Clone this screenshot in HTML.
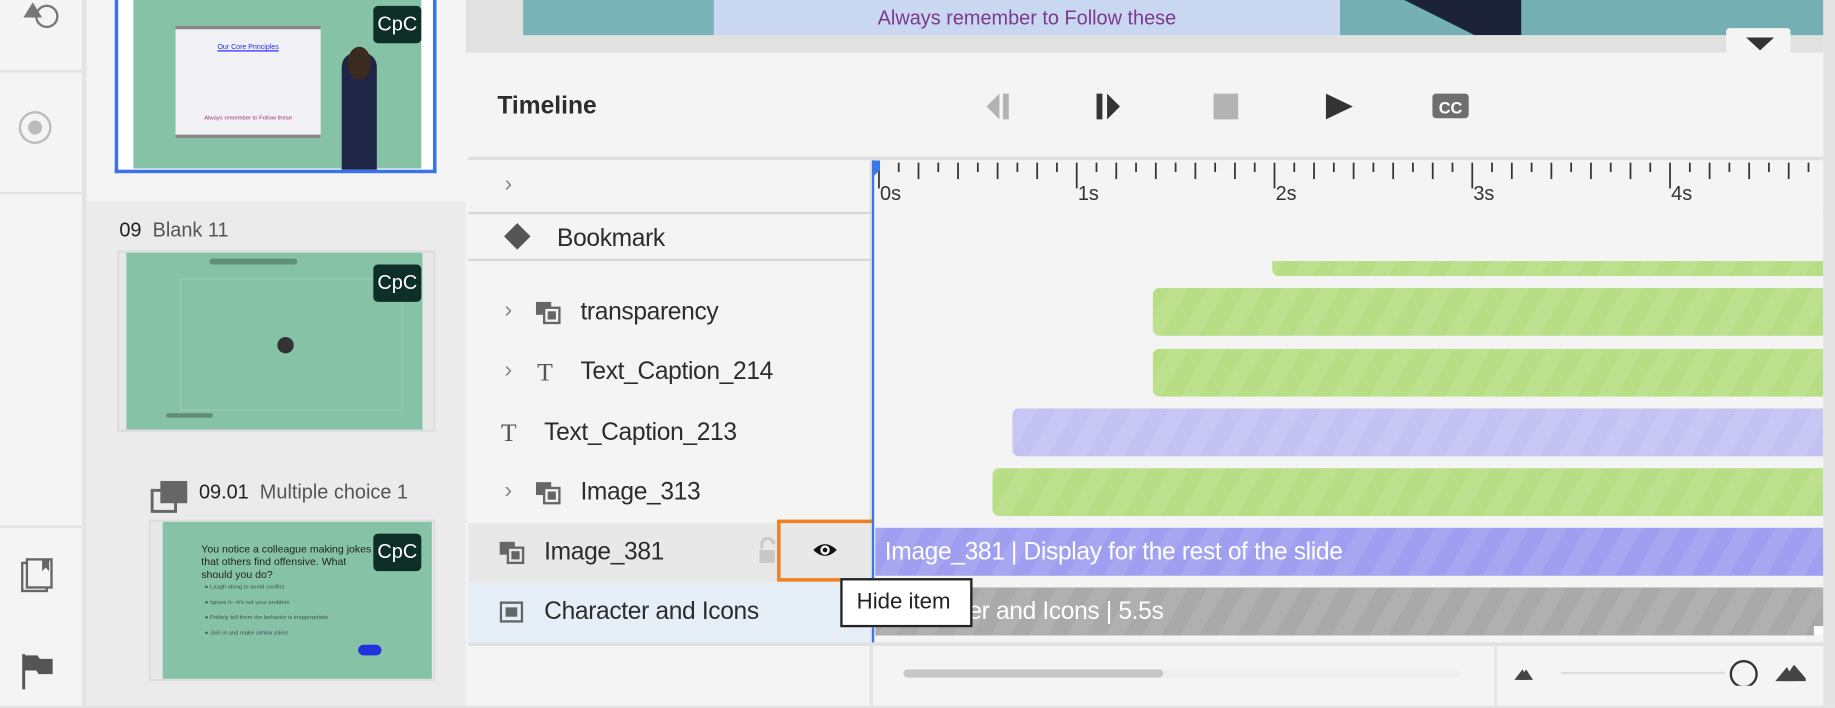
<!DOCTYPE html>
<html><head><meta charset="utf-8"><style>
*{margin:0;padding:0;box-sizing:border-box}
body{width:1835px;height:708px;overflow:hidden;background:#f4f4f4;font-family:"Liberation Sans",sans-serif}
#w{position:absolute;left:0;top:0;width:1568px;height:605px;transform:scale(1.17028,1.17025);transform-origin:0 0}
.a{position:absolute}
.lbl{position:absolute;font-size:21px;color:#2c2c2c;letter-spacing:-0.3px}
.chev{position:absolute;color:#8a8a8a;font-size:20px}
.bar{position:absolute;border-radius:6px 0 0 6px;background-image:repeating-linear-gradient(-60deg,rgba(255,255,255,0) 0 14px,rgba(255,255,255,.08) 14px 28px)}
.cpc{position:absolute;width:41px;height:32px;background:#0e2e28;border-radius:4px;color:#fff;font-size:17px;text-align:center;line-height:32px}
.thumb{position:absolute;background:#85c2a6}
</style></head><body><div id="w">
<div class="a" style="left:0;top:0;width:70px;height:605px;background:#f4f4f4"></div>
<div class="a" style="left:70px;top:0;width:4px;height:605px;background:#e4e4e4"></div>
<div class="a" style="left:0;top:60px;width:70px;height:2px;background:#e2e2e2"></div>
<div class="a" style="left:0;top:164px;width:70px;height:2px;background:#e2e2e2"></div>
<div class="a" style="left:0;top:449px;width:70px;height:2px;background:#e2e2e2"></div>
<svg class="a" style="left:14px;top:0" width="40" height="40"><polygon points="6,15 14,2 22,15" fill="#777"/><circle cx="26" cy="14" r="9" fill="none" stroke="#777" stroke-width="2"/></svg>
<div class="a" style="left:16px;top:95px;width:28px;height:28px;border:2px solid #bbb;border-radius:50%"></div>
<div class="a" style="left:24px;top:103px;width:12px;height:12px;background:#bbb;border-radius:50%"></div>
<svg class="a" style="left:16px;top:476px" width="34" height="34"><rect x="3" y="5" width="21" height="24" fill="none" stroke="#666" stroke-width="2"/><rect x="7" y="2" width="21" height="24" fill="#f4f4f4" stroke="#666" stroke-width="2"/><polygon points="20,2 26,2 26,12 23,9 20,12" fill="#666"/></svg>
<svg class="a" style="left:17px;top:556px" width="34" height="34"><rect x="2" y="3" width="2.5" height="30" fill="#555"/><polygon points="4,4 15,4 17,7 28,7 28,20 16,20 14,17 4,17" fill="#555"/></svg>
<div class="a" style="left:74px;top:0;width:324px;height:172px;background:#f4f4f4"></div>
<div class="a" style="left:74px;top:172px;width:324px;height:433px;background:#ebebeb"></div>
<div class="a" style="left:98px;top:0;width:275px;height:148px;border:3px solid #3a72e8;border-top:none;background:#fff"></div>
<div class="thumb" style="left:114px;top:0;width:246px;height:144px"></div>
<div class="a" style="left:150px;top:22px;width:124px;height:96px;background:#f2f2f6;border-top:3px solid #888;border-bottom:3px solid #888"></div>
<div class="a" style="left:150px;top:38px;width:124px;text-align:center;font-size:6px;color:#22f;text-decoration:underline">Our Core Principles</div>
<div class="a" style="left:150px;top:98px;width:124px;text-align:center;font-size:5px;color:#937">Always remember to Follow these</div>
<div class="a" style="left:292px;top:45px;width:30px;height:100px;background:#1e2547;border-radius:12px 12px 0 0"></div>
<div class="a" style="left:297px;top:40px;width:20px;height:28px;background:#3a2a20;border-radius:50%"></div>
<div class="cpc" style="left:319px;top:5px">CpC</div>
<div class="a" style="left:102px;top:187px;font-size:17px;color:#2c2c2c"><b style="font-weight:normal;color:#222">09</b>&nbsp; <span style="color:#555">Blank 11</span></div>
<div class="a" style="left:100px;top:214px;width:272px;height:155px;border:2px solid #ddd;background:#e8e8e8"></div>
<div class="thumb" style="left:108px;top:216px;width:253px;height:151px"></div>
<div class="a" style="left:179px;top:221px;width:75px;height:5px;background:#5f8f7a;border-radius:3px"></div>
<div class="a" style="left:154px;top:238px;width:190px;height:113px;border:1px solid #9ccbb4"></div>
<div class="a" style="left:237px;top:288px;width:14px;height:14px;background:#333;border-radius:50%"></div>
<div class="a" style="left:142px;top:353px;width:40px;height:4px;background:#5f8f7a;border-radius:2px"></div>
<div class="cpc" style="left:319px;top:226px">CpC</div>
<svg class="a" style="left:128px;top:409px" width="34" height="30"><rect x="2" y="10" width="20" height="18" fill="none" stroke="#666" stroke-width="2.5"/><rect x="9" y="2" width="23" height="19" fill="#666"/></svg>
<div class="a" style="left:170px;top:411px;font-size:17px"><span style="color:#222">09.01</span>&nbsp; <span style="color:#555">Multiple choice 1</span></div>
<div class="a" style="left:127px;top:444px;width:245px;height:138px;border:2px solid #ddd;background:#e8e8e8"></div>
<div class="thumb" style="left:139px;top:446px;width:230px;height:134px"></div>
<div class="a" style="left:172px;top:464px;width:150px;font-size:9px;color:#222;line-height:11px">You notice a colleague making jokes that others find offensive. What should you do?</div>
<div class="a" style="left:175px;top:496px;font-size:5px;color:#455;line-height:13px">● Laugh along to avoid conflict<br>● Ignore it—it's not your problem<br>● Politely tell them the behavior is inappropriate<br>● Join in and make similar jokes</div>
<div class="a" style="left:306px;top:551px;width:20px;height:9px;background:#2233dd;border-radius:5px"></div>
<div class="cpc" style="left:319px;top:456px">CpC</div>
<div class="a" style="left:398px;top:0;width:1170px;height:45px;background:#e1e1e1"></div>
<div class="a" style="left:447px;top:0;width:163px;height:30px;background:#78b4b6"></div>
<div class="a" style="left:610px;top:0;width:535px;height:30px;background:#c9d7f1"></div>
<div class="a" style="left:610px;top:6px;width:535px;text-align:center;font-size:17px;color:#7a3a8e">Always remember to Follow these</div>
<div class="a" style="left:1145px;top:0;width:413px;height:30px;background:#74b0b3"></div>
<div class="a" style="left:1200px;top:0;width:100px;height:30px;background:#1c2238;clip-path:polygon(0 0,100% 0,100% 100%,60% 100%)"></div>
<div class="a" style="left:1475px;top:24px;width:55px;height:21px;background:#f4f4f4;border-radius:3px 3px 0 0"></div>
<svg class="a" style="left:1492px;top:32px" width="26" height="12"><polygon points="0,0 24,0 12,11" fill="#333"/></svg>
<div class="a" style="left:400px;top:45px;width:1158px;height:90px;background:#f4f4f4"></div>
<div class="a" style="left:425px;top:79px;font-size:21px;font-weight:bold;color:#2c2c2c">Timeline</div>
<svg class="a" style="left:840px;top:76px" width="440" height="30">
<polygon points="3,15 14,4 14,26" fill="#b3b3b3"/><rect x="17" y="4" width="5" height="22" fill="#b3b3b3"/>
<rect x="97" y="4" width="5" height="22" fill="#333"/><polygon points="106,4 117,15 106,26" fill="#333"/>
<rect x="197" y="4" width="21" height="22" fill="#b3b3b3"/>
<polygon points="293,4 316,15 293,26" fill="#333"/>
<rect x="384" y="4" width="31" height="21" rx="3" fill="#6e6e6e"/><text x="399.5" y="21" font-size="14" font-weight="bold" fill="#fff" text-anchor="middle" font-family="Liberation Sans">CC</text>
</svg>
<div class="a" style="left:400px;top:134px;width:1158px;height:3px;background:#e0e0e0"></div>
<div class="a" style="left:400px;top:137px;width:344px;height:468px;background:#f4f4f4"></div>
<div class="a" style="left:743px;top:137px;width:3px;height:468px;background:#e3e3e3"></div>
<div class="a" style="left:400px;top:181px;width:1158px;height:2px;background:#d8d8d8"></div>
<div class="a" style="left:400px;top:221px;width:1158px;height:2px;background:#d8d8d8"></div>
<div class="chev" style="left:431px;top:146px">›</div>
<div class="a" style="left:434px;top:194px;width:16px;height:16px;background:#555;transform:rotate(45deg)"></div>
<div class="lbl" style="left:476px;top:192px">Bookmark</div>
<div class="a" style="left:400px;top:447px;width:344px;height:51px;background:#e8e8e8"></div>
<div class="a" style="left:400px;top:498px;width:344px;height:51px;background:#e6eef8"></div>
<div class="a" style="left:400px;top:549px;width:1158px;height:3px;background:#e1e1e1"></div>
<div class="chev" style="left:431px;top:254px">›</div>
<div class="chev" style="left:431px;top:305px">›</div>
<div class="chev" style="left:431px;top:408px">›</div>
<svg class="a" style="left:457px;top:256px" width="24" height="22"><rect x="1" y="2" width="13" height="11" fill="#666"/><rect x="8" y="7" width="13" height="13" fill="#f4f4f4" stroke="#666" stroke-width="2"/><rect x="11" y="10" width="7" height="7" fill="#666"/></svg>
<svg class="a" style="left:457px;top:410px" width="24" height="22"><rect x="1" y="2" width="13" height="11" fill="#666"/><rect x="8" y="7" width="13" height="13" fill="#f4f4f4" stroke="#666" stroke-width="2"/><rect x="11" y="10" width="7" height="7" fill="#666"/></svg>
<svg class="a" style="left:426px;top:461px" width="24" height="22"><rect x="1" y="2" width="13" height="11" fill="#666"/><rect x="8" y="7" width="13" height="13" fill="#e8e8e8" stroke="#666" stroke-width="2"/><rect x="11" y="10" width="7" height="7" fill="#666"/></svg>
<div class="a" style="left:459px;top:305px;font-family:'Liberation Serif',serif;font-size:22px;color:#555">T</div>
<div class="a" style="left:428px;top:357px;font-family:'Liberation Serif',serif;font-size:22px;color:#555">T</div>
<svg class="a" style="left:427px;top:514px" width="22" height="20"><rect x="1" y="1" width="18" height="16" fill="none" stroke="#666" stroke-width="2"/><rect x="5" y="5" width="10" height="8" fill="#666"/></svg>
<div class="lbl" style="left:496px;top:255px">transparency</div>
<div class="lbl" style="left:496px;top:306px">Text_Caption_214</div>
<div class="lbl" style="left:465px;top:358px">Text_Caption_213</div>
<div class="lbl" style="left:496px;top:409px">Image_313</div>
<div class="lbl" style="left:465px;top:460px">Image_381</div>
<div class="lbl" style="left:465px;top:511px">Character and Icons</div>
<svg class="a" style="left:647px;top:459px" width="20" height="24"><path d="M4 10 V6 a5 5 0 0 1 10 0" fill="none" stroke="#c8c8c8" stroke-width="2.5"/><rect x="2" y="11" width="13" height="11" fill="#c8c8c8"/></svg>
<div class="a" style="left:664px;top:444px;width:86px;height:53px;border:3px solid #f07f22"></div>
<svg class="a" style="left:694px;top:462px" width="22" height="16"><path d="M1 8 Q11 -2 21 8 Q11 18 1 8Z" fill="#111"/><circle cx="11" cy="8" r="4" fill="#fff"/><circle cx="11" cy="8" r="2" fill="#111"/></svg>
<div class="a" style="left:746px;top:137px;width:812px;height:412px;background:#f4f4f4;overflow:hidden">
<svg class="a" style="left:0;top:0" width="812" height="44" id="rul"></svg>
</div>
<div class="a" style="left:745px;top:137px;width:2px;height:412px;background:#3b78e7"></div>
<div class="a" style="left:745px;top:137px;width:7px;height:15px;background:#3b78e7;clip-path:polygon(0 0,100% 0,100% 55%,0 100%)"></div>
<div class="bar" style="left:1087px;top:223px;width:471px;height:13px;background-color:#b7de85;border-radius:0 0 0 6px"></div>
<div class="bar" style="left:985px;top:246px;width:573px;height:41px;background-color:#b7de85"></div>
<div class="bar" style="left:985px;top:298px;width:573px;height:41px;background-color:#b7de85"></div>
<div class="bar" style="left:865px;top:349px;width:693px;height:41px;background-color:#c4c2f3"></div>
<div class="bar" style="left:848px;top:400px;width:710px;height:41px;background-color:#b7de85"></div>
<div class="bar" style="left:748px;top:451px;width:810px;height:41px;background-color:#a09ef0;border-radius:0"></div>
<div class="a" style="left:756px;top:460px;font-size:21px;color:#fff;letter-spacing:-0.3px">Image_381 | Display for the rest of the slide</div>
<div class="bar" style="left:748px;top:502px;width:810px;height:41px;background-color:#a9a9a9;border-radius:0"></div>
<div class="a" style="left:756px;top:511px;font-size:21px;color:#fff;letter-spacing:-0.3px">Character and Icons | 5.5s</div>
<div class="a" style="left:1550px;top:535px;width:8px;height:8px;background:#fff"></div>
<div class="a" style="left:1558px;top:0;width:10px;height:605px;background:#e4e4e4"></div>
<div class="a" style="left:718px;top:494px;width:113px;height:42px;background:#fff;border:2px solid #222"></div>
<div class="a" style="left:732px;top:504px;font-size:19px;color:#222">Hide item</div>
<div class="a" style="left:746px;top:552px;width:812px;height:53px;background:#f4f4f4"></div>
<div class="a" style="left:1277px;top:552px;width:2px;height:53px;background:#e3e3e3"></div>
<div class="a" style="left:772px;top:572px;width:476px;height:7px;background:#eee;border-radius:4px"></div>
<div class="a" style="left:772px;top:572px;width:222px;height:7px;background:#c6c6c6;border-radius:4px"></div>
<svg class="a" style="left:1293px;top:564px" width="250" height="22"><polygon points="1,17 8,8 13,17" fill="#444"/><polygon points="5,17 11,8 17,17" fill="#444"/><rect x="41" y="10" width="140" height="2" fill="#ddd"/><circle cx="197" cy="12" r="11" fill="none" stroke="#333" stroke-width="2"/><polygon points="224,18 234,6 240,18" fill="#444"/><polygon points="230,18 240,4 252,18" fill="#444"/></svg>
<div class="a" style="left:0;top:603px;width:1568px;height:2px;background:#e2e2e2"></div>
</div>
<script>
(function(){var s=document.getElementById('rul'),h='';var x0=5,d=16.9;for(var i=0;i<48;i++){var x=x0+i*d;var m=i%10==0;var l=m?22:(i%2?8:14);h+='<rect x="'+(x-0.7)+'" y="2" width="1.5" height="'+l+'" fill="#333"/>';if(m)h+='<text x="'+(x+1)+'" y="34" font-size="17" fill="#333" font-family="Liberation Sans">'+(i/10)+'s</text>';}s.innerHTML=h;})();
</script>
</body></html>
